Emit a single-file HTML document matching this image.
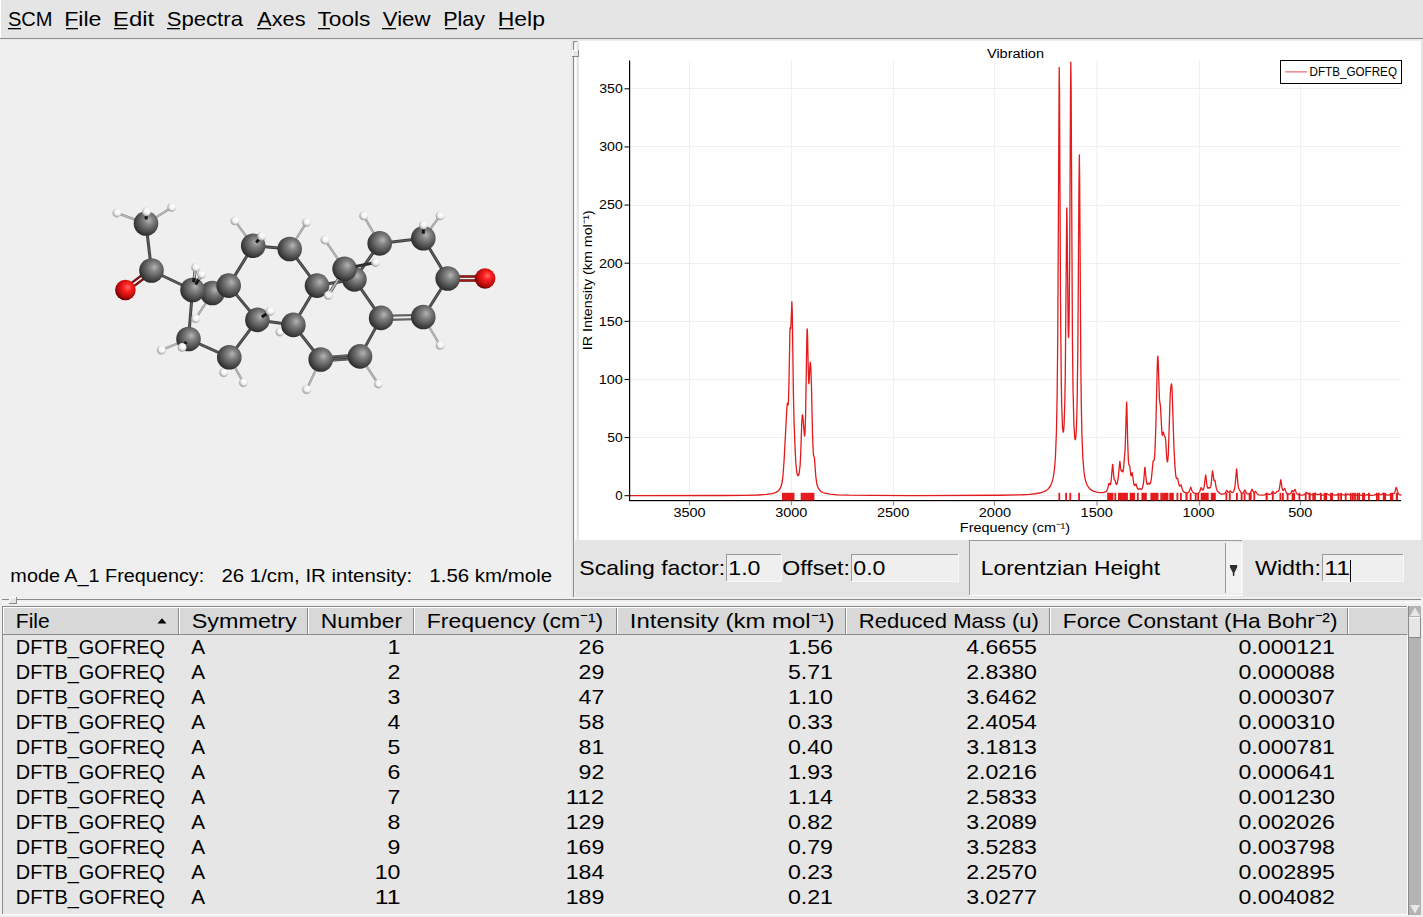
<!DOCTYPE html>
<html><head><meta charset="utf-8"><title>SCM Spectra</title>
<style>html,body{margin:0;padding:0;width:1423px;height:917px;overflow:hidden;background:#efefef}</style></head>
<body><svg width="1423" height="917" viewBox="0 0 1423 917" style="display:block;font-family:'Liberation Sans',sans-serif"><defs>
<radialGradient id="gC" cx="0.58" cy="0.40" r="0.66" fx="0.62" fy="0.36"><stop offset="0" stop-color="#b4b4b4"/><stop offset="0.3" stop-color="#808080"/><stop offset="0.75" stop-color="#444444"/><stop offset="1" stop-color="#222222"/></radialGradient>
<radialGradient id="gO" cx="0.58" cy="0.40" r="0.66" fx="0.62" fy="0.36"><stop offset="0" stop-color="#ff6a6a"/><stop offset="0.3" stop-color="#ff2020"/><stop offset="0.75" stop-color="#b00808"/><stop offset="1" stop-color="#3a0000"/></radialGradient>
<radialGradient id="gH" cx="0.58" cy="0.40" r="0.66" fx="0.62" fy="0.36"><stop offset="0" stop-color="#ffffff"/><stop offset="0.5" stop-color="#f2f2f2"/><stop offset="1" stop-color="#8a8a8a"/></radialGradient>
</defs><rect x="0" y="0" width="1423" height="917" fill="#efefef"/><rect x="0" y="0" width="1423" height="38" fill="#e5e5e5"/><rect x="0" y="0" width="1" height="38" fill="#ffffff"/><rect x="0" y="38" width="1423" height="1" fill="#8c8c8c"/><rect x="0" y="39" width="1423" height="1" fill="#e9e9e9"/><rect x="0" y="40" width="1423" height="1" fill="#ececec"/><text x="7.94" y="25.90" font-size="21.00" textLength="44.65" lengthAdjust="spacingAndGlyphs" fill="#000">SCM</text><rect x="8" y="28" width="13" height="1.3" fill="#000"/><text x="64.17" y="25.90" font-size="21.00" textLength="37.35" lengthAdjust="spacingAndGlyphs" fill="#000">File</text><rect x="66" y="28" width="12" height="1.3" fill="#000"/><text x="113.01" y="25.90" font-size="21.00" textLength="41.21" lengthAdjust="spacingAndGlyphs" fill="#000">Edit</text><rect x="114" y="28" width="13" height="1.3" fill="#000"/><text x="166.65" y="25.90" font-size="21.00" textLength="76.32" lengthAdjust="spacingAndGlyphs" fill="#000">Spectra</text><rect x="167" y="28" width="13" height="1.3" fill="#000"/><text x="257.20" y="25.90" font-size="21.00" textLength="48.31" lengthAdjust="spacingAndGlyphs" fill="#000">Axes</text><rect x="257" y="28" width="14" height="1.3" fill="#000"/><text x="317.46" y="25.90" font-size="21.00" textLength="52.98" lengthAdjust="spacingAndGlyphs" fill="#000">Tools</text><rect x="318" y="28" width="12" height="1.3" fill="#000"/><text x="382.74" y="25.90" font-size="21.00" textLength="47.74" lengthAdjust="spacingAndGlyphs" fill="#000">View</text><rect x="382" y="28" width="14" height="1.3" fill="#000"/><text x="443.31" y="25.90" font-size="21.00" textLength="41.69" lengthAdjust="spacingAndGlyphs" fill="#000">Play</text><rect x="445" y="28" width="12" height="1.3" fill="#000"/><text x="497.69" y="25.90" font-size="21.00" textLength="47.24" lengthAdjust="spacingAndGlyphs" fill="#000">Help</text><rect x="499" y="28" width="15" height="1.3" fill="#000"/><rect x="0" y="41" width="571" height="556" fill="#efefef"/><text x="10.39" y="582.10" font-size="18.90" textLength="193.85" lengthAdjust="spacingAndGlyphs" fill="#000">mode A_1 Frequency:</text><text x="221.42" y="582.10" font-size="18.90" textLength="190.73" lengthAdjust="spacingAndGlyphs" fill="#000">26 1/cm, IR intensity:</text><text x="429.38" y="582.10" font-size="18.90" textLength="122.67" lengthAdjust="spacingAndGlyphs" fill="#000">1.56 km/mole</text><rect x="571" y="41" width="2" height="556" fill="#e6e6e6"/><rect x="573" y="41" width="1" height="556" fill="#8a8a8a"/><rect x="575" y="41" width="1" height="556" fill="#ffffff"/><rect x="576" y="41" width="1" height="556" fill="#f4f4f4"/><rect x="577" y="41" width="2" height="556" fill="#e4e4e4"/><rect x="573" y="41" width="4" height="1" fill="#8a8a8a"/><rect x="572" y="50" width="7" height="7" fill="#e6e6e6"/><rect x="572" y="50" width="7" height="1" fill="#ffffff"/><rect x="572" y="50" width="1" height="7" fill="#ffffff"/><rect x="572" y="56" width="7" height="1" fill="#8a8a8a"/><rect x="578" y="50" width="1" height="7" fill="#8a8a8a"/><rect x="579" y="41" width="842" height="499" fill="#ffffff"/><rect x="1421" y="41" width="2" height="556" fill="#e4e4e4"/><rect x="689" y="61" width="1" height="439" fill="#f0f0f0"/><rect x="791" y="61" width="1" height="439" fill="#f0f0f0"/><rect x="893" y="61" width="1" height="439" fill="#f0f0f0"/><rect x="994" y="61" width="1" height="439" fill="#f0f0f0"/><rect x="1096.5" y="61" width="1" height="439" fill="#f0f0f0"/><rect x="1199" y="61" width="1" height="439" fill="#f0f0f0"/><rect x="1300" y="61" width="1" height="439" fill="#f0f0f0"/><rect x="630" y="495" width="771" height="1" fill="#f0f0f0"/><rect x="630" y="437" width="771" height="1" fill="#f0f0f0"/><rect x="630" y="379" width="771" height="1" fill="#f0f0f0"/><rect x="630" y="321" width="771" height="1" fill="#f0f0f0"/><rect x="630" y="263" width="771" height="1" fill="#f0f0f0"/><rect x="630" y="205" width="771" height="1" fill="#f0f0f0"/><rect x="630" y="146" width="771" height="1" fill="#f0f0f0"/><rect x="630" y="88" width="771" height="1" fill="#f0f0f0"/><path d="M629.50,495.65 L722.85,495.49 L743.92,495.31 L757.36,494.99 L766.42,494.43 L772.43,493.53 L774.56,492.92 L776.40,492.13 L777.92,491.14 L779.15,489.94 L780.47,487.86 L781.49,485.10 L782.30,481.25 L782.91,476.53 L784.13,459.89 L786.88,407.56 L787.39,403.21 L787.60,403.32 L788.10,405.01 L788.41,402.52 L788.92,385.57 L789.94,330.65 L790.14,327.66 L790.24,327.40 L790.65,329.00 L790.85,327.92 L791.87,301.77 L792.28,311.96 L793.40,393.78 L794.11,422.86 L795.23,451.84 L795.84,463.15 L796.76,471.99 L797.27,474.33 L797.88,475.61 L798.28,475.67 L798.59,475.30 L799.20,473.28 L800.12,465.12 L800.73,453.17 L801.75,422.74 L802.25,415.25 L802.36,414.86 L802.56,414.96 L802.97,417.69 L804.39,435.29 L804.60,435.96 L804.70,435.80 L805.00,433.09 L805.61,415.57 L806.73,343.36 L807.04,330.77 L807.24,328.83 L807.55,335.39 L808.36,374.07 L808.77,383.26 L808.87,383.67 L808.97,383.39 L809.18,381.05 L809.89,365.79 L810.19,362.44 L810.30,362.22 L810.50,363.09 L810.91,369.24 L811.52,388.34 L812.54,435.51 L813.25,452.54 L813.66,455.83 L814.27,457.07 L814.47,458.24 L815.79,476.40 L816.81,483.71 L817.52,486.36 L818.54,488.68 L819.76,490.36 L821.29,491.65 L822.82,492.49 L824.75,493.19 L829.84,494.18 L837.48,494.81 L848.98,495.19 L872.09,495.44 L912.61,495.53 L999.44,495.24 L1022.04,494.73 L1029.47,494.32 L1035.17,493.76 L1039.65,493.01 L1043.22,491.99 L1045.96,490.70 L1048.20,488.97 L1050.14,486.52 L1051.66,483.31 L1052.89,479.15 L1053.90,473.59 L1054.72,466.56 L1055.43,456.93 L1056.45,431.27 L1057.16,394.29 L1057.77,333.50 L1059.20,67.37 L1059.50,88.46 L1060.52,300.99 L1061.23,378.85 L1061.74,406.68 L1062.46,426.07 L1062.86,430.86 L1063.27,432.23 L1063.68,430.38 L1064.08,424.98 L1064.80,403.46 L1065.31,372.35 L1066.73,208.54 L1066.83,207.84 L1067.04,217.64 L1068.16,327.67 L1068.36,334.96 L1068.46,336.78 L1068.56,337.42 L1068.67,336.88 L1069.07,322.62 L1069.68,258.23 L1070.50,94.41 L1070.80,62.26 L1071.11,85.39 L1072.43,339.40 L1073.04,390.73 L1073.96,426.10 L1074.77,437.93 L1074.98,439.10 L1075.28,439.70 L1075.69,438.30 L1076.10,434.08 L1076.50,426.23 L1077.11,404.10 L1077.83,350.03 L1078.95,185.72 L1079.35,155.00 L1079.66,177.97 L1080.78,359.55 L1081.29,403.86 L1081.90,434.28 L1082.82,457.73 L1084.04,472.27 L1084.85,477.53 L1085.87,481.77 L1087.09,485.00 L1088.62,487.53 L1090.14,489.15 L1091.88,490.37 L1094.01,491.36 L1096.56,492.10 L1099.82,492.57 L1102.77,492.60 L1104.80,492.21 L1106.23,491.36 L1106.94,490.42 L1107.45,489.25 L1108.88,483.37 L1109.18,483.34 L1109.79,484.58 L1110.10,484.82 L1110.40,484.50 L1110.71,483.56 L1111.32,479.36 L1112.54,464.28 L1112.85,465.42 L1113.56,474.50 L1114.07,478.55 L1114.37,479.54 L1115.09,480.57 L1115.90,483.53 L1116.41,484.46 L1116.82,484.30 L1117.22,483.34 L1118.24,477.99 L1119.77,461.61 L1119.87,461.49 L1120.07,462.34 L1120.68,468.43 L1121.09,470.73 L1121.30,470.98 L1121.91,470.40 L1122.72,472.04 L1123.03,471.75 L1123.54,468.46 L1125.16,449.10 L1126.59,402.13 L1126.89,406.89 L1127.71,443.02 L1128.32,459.22 L1128.73,463.80 L1128.93,464.74 L1129.54,465.44 L1129.75,466.26 L1130.87,475.14 L1131.07,475.70 L1131.27,475.75 L1132.09,472.92 L1132.29,472.80 L1132.39,473.06 L1133.61,482.75 L1134.02,484.61 L1134.43,485.53 L1134.63,485.68 L1134.94,485.57 L1135.65,484.15 L1135.95,483.90 L1136.26,484.46 L1137.18,487.83 L1137.89,489.12 L1138.50,489.31 L1139.72,488.47 L1140.74,489.32 L1141.45,489.30 L1141.96,488.78 L1142.47,487.77 L1143.28,484.34 L1143.90,478.97 L1144.71,468.40 L1145.02,467.25 L1146.13,479.20 L1146.85,483.51 L1147.15,484.24 L1147.46,484.48 L1147.76,484.29 L1148.58,483.05 L1148.88,483.15 L1149.70,484.05 L1150.00,483.95 L1150.31,483.50 L1150.92,481.48 L1151.43,478.27 L1152.96,462.33 L1153.26,461.00 L1153.46,460.69 L1153.97,460.51 L1154.28,459.56 L1154.89,452.70 L1155.81,427.27 L1157.23,367.51 L1157.54,359.16 L1157.84,356.07 L1158.25,361.45 L1159.37,397.43 L1159.67,401.36 L1160.29,404.78 L1160.59,408.30 L1161.91,433.11 L1162.12,434.67 L1162.22,435.06 L1162.42,435.15 L1163.14,432.35 L1163.44,432.12 L1164.46,436.39 L1164.66,436.67 L1165.17,436.81 L1165.38,437.56 L1165.78,441.80 L1166.70,457.32 L1167.11,461.03 L1167.41,461.88 L1167.72,461.15 L1168.33,454.45 L1170.16,395.99 L1170.87,386.89 L1171.28,384.24 L1171.48,383.82 L1171.59,383.99 L1171.89,386.58 L1172.20,392.75 L1173.93,446.74 L1174.94,466.34 L1175.66,474.84 L1176.37,478.37 L1176.78,478.66 L1177.39,478.11 L1177.69,478.46 L1178.81,484.11 L1179.32,485.66 L1179.83,486.05 L1180.75,484.78 L1181.05,484.89 L1182.58,490.07 L1183.39,491.38 L1184.41,492.21 L1185.53,492.68 L1186.65,492.87 L1187.67,492.79 L1188.48,492.40 L1189.40,491.12 L1190.72,487.22 L1191.03,487.58 L1191.84,490.43 L1192.45,491.77 L1194.08,493.08 L1195.20,493.56 L1197.34,493.56 L1198.26,493.25 L1198.97,492.73 L1199.89,491.23 L1201.11,487.56 L1201.41,487.71 L1202.33,489.76 L1202.63,490.04 L1203.04,489.95 L1203.65,488.84 L1204.16,486.70 L1205.59,474.96 L1205.89,475.87 L1206.81,484.34 L1207.42,487.40 L1208.03,488.36 L1209.05,487.58 L1209.86,487.91 L1210.17,487.80 L1210.68,486.70 L1211.19,484.01 L1212.30,471.93 L1212.61,470.77 L1213.83,480.12 L1214.14,480.77 L1214.75,480.19 L1215.05,480.61 L1216.07,487.12 L1216.78,489.93 L1217.19,490.69 L1218.11,491.53 L1219.13,492.88 L1220.04,493.60 L1221.26,494.02 L1222.79,494.14 L1224.11,493.92 L1225.34,493.01 L1226.56,490.48 L1226.86,490.26 L1227.88,491.95 L1228.39,492.44 L1229.10,492.28 L1230.22,490.93 L1230.53,491.07 L1231.65,492.47 L1232.56,492.55 L1233.28,491.99 L1233.89,490.95 L1234.80,487.47 L1235.41,482.40 L1236.53,469.01 L1236.84,470.33 L1237.86,483.44 L1238.47,487.63 L1239.08,489.48 L1240.81,492.18 L1241.42,492.88 L1242.13,493.22 L1242.85,493.15 L1243.46,492.66 L1244.88,489.92 L1245.19,490.20 L1246.20,492.69 L1246.82,493.51 L1248.04,494.09 L1249.36,493.96 L1250.07,493.49 L1250.58,492.81 L1251.80,489.50 L1252.11,489.24 L1253.13,491.69 L1253.64,492.48 L1254.25,492.62 L1255.26,491.49 L1255.57,491.45 L1257.20,494.01 L1258.01,494.53 L1259.13,494.85 L1261.98,495.05 L1264.43,494.86 L1265.55,494.40 L1266.87,493.21 L1268.60,494.41 L1270.13,494.45 L1271.35,493.70 L1272.77,491.40 L1273.08,491.54 L1274.20,493.22 L1274.71,493.50 L1275.22,493.48 L1275.93,492.97 L1277.05,491.34 L1278.17,491.47 L1278.88,490.47 L1279.49,488.04 L1280.71,479.77 L1281.02,480.51 L1282.04,487.87 L1282.65,489.99 L1282.95,490.40 L1283.36,490.39 L1284.38,488.43 L1284.68,488.36 L1286.31,492.88 L1287.13,493.76 L1288.35,494.22 L1289.47,494.16 L1290.39,493.65 L1291.00,492.84 L1292.12,490.55 L1292.42,490.63 L1293.24,491.69 L1293.64,491.69 L1294.97,489.42 L1295.27,489.80 L1296.29,492.77 L1297.00,493.88 L1298.33,494.70 L1300.46,495.06 L1302.70,495.04 L1304.23,494.70 L1305.04,494.12 L1306.06,492.59 L1306.47,492.30 L1307.90,493.78 L1308.40,493.80 L1309.52,493.34 L1310.95,494.57 L1312.37,494.93 L1314.00,494.60 L1315.53,493.25 L1316.85,494.38 L1317.46,494.67 L1318.28,494.69 L1319.70,494.16 L1321.13,494.94 L1322.66,495.20 L1325.00,494.90 L1326.73,493.58 L1328.26,494.72 L1329.38,494.99 L1330.49,494.80 L1331.82,494.03 L1333.35,494.93 L1334.57,495.19 L1336.30,495.07 L1337.93,494.30 L1339.35,494.98 L1340.17,495.16 L1341.49,495.09 L1343.02,494.51 L1344.54,495.06 L1345.56,495.14 L1346.68,494.89 L1348.11,493.96 L1349.63,494.90 L1350.65,495.12 L1351.77,494.99 L1353.20,494.32 L1354.72,495.07 L1356.15,495.32 L1357.78,495.25 L1359.30,494.80 L1361.54,495.30 L1364.09,495.03 L1365.92,495.12 L1367.65,494.58 L1369.59,495.27 L1372.13,495.40 L1374.17,495.17 L1375.80,494.45 L1377.02,494.79 L1377.73,494.79 L1379.26,493.99 L1380.58,494.61 L1381.39,494.66 L1382.11,494.32 L1383.33,493.10 L1384.86,494.32 L1386.89,494.99 L1388.32,495.10 L1391.17,494.43 L1392.49,493.56 L1393.51,493.66 L1394.12,493.38 L1394.93,491.96 L1395.95,487.99 L1396.26,487.42 L1396.56,487.79 L1397.68,492.03 L1398.40,493.61 L1399.52,494.65 L1401.45,495.22" fill="none" stroke="#e41a1c" stroke-width="1.3" stroke-linejoin="round"/><rect x="629" y="60.5" width="1.2" height="440.5" fill="#000"/><rect x="629" y="500" width="772" height="1.2" fill="#000"/><rect x="782.00" y="492.8" width="12.50" height="7.6" fill="#e41a1c"/><rect x="800.70" y="492.8" width="13.70" height="7.6" fill="#e41a1c"/><rect x="1058.40" y="492.8" width="1.80" height="7.6" fill="#e41a1c"/><rect x="1065.20" y="492.8" width="1.80" height="7.6" fill="#e41a1c"/><rect x="1069.40" y="492.8" width="1.80" height="7.6" fill="#e41a1c"/><rect x="1078.20" y="492.8" width="1.80" height="7.6" fill="#e41a1c"/><rect x="1107.20" y="492.8" width="6.30" height="7.6" fill="#e41a1c"/><rect x="1114.40" y="492.8" width="1.80" height="7.6" fill="#e41a1c"/><rect x="1118.00" y="492.8" width="9.90" height="7.6" fill="#e41a1c"/><rect x="1129.70" y="492.8" width="5.40" height="7.6" fill="#e41a1c"/><rect x="1136.90" y="492.8" width="1.80" height="7.6" fill="#e41a1c"/><rect x="1141.40" y="492.8" width="5.40" height="7.6" fill="#e41a1c"/><rect x="1150.40" y="492.8" width="8.10" height="7.6" fill="#e41a1c"/><rect x="1160.30" y="492.8" width="1.80" height="7.6" fill="#e41a1c"/><rect x="1162.10" y="492.8" width="6.30" height="7.6" fill="#e41a1c"/><rect x="1169.30" y="492.8" width="4.50" height="7.6" fill="#e41a1c"/><rect x="1176.50" y="492.8" width="1.80" height="7.6" fill="#e41a1c"/><rect x="1180.00" y="492.8" width="1.80" height="7.6" fill="#e41a1c"/><rect x="1185.50" y="492.8" width="2.10" height="7.6" fill="#e41a1c"/><rect x="1189.70" y="492.8" width="1.80" height="7.6" fill="#e41a1c"/><rect x="1194.80" y="492.8" width="1.80" height="7.6" fill="#e41a1c"/><rect x="1197.30" y="492.8" width="1.80" height="7.6" fill="#e41a1c"/><rect x="1200.70" y="492.8" width="8.00" height="7.6" fill="#e41a1c"/><rect x="1210.80" y="492.8" width="5.00" height="7.6" fill="#e41a1c"/><rect x="1225.50" y="492.8" width="1.80" height="7.6" fill="#e41a1c"/><rect x="1228.90" y="492.8" width="1.80" height="7.6" fill="#e41a1c"/><rect x="1236.00" y="492.8" width="1.80" height="7.6" fill="#e41a1c"/><rect x="1240.70" y="492.8" width="1.80" height="7.6" fill="#e41a1c"/><rect x="1243.70" y="492.8" width="1.80" height="7.6" fill="#e41a1c"/><rect x="1248.70" y="492.8" width="3.00" height="7.6" fill="#e41a1c"/><rect x="1253.40" y="492.8" width="1.80" height="7.6" fill="#e41a1c"/><rect x="1265.60" y="492.8" width="2.10" height="7.6" fill="#e41a1c"/><rect x="1271.90" y="492.8" width="1.80" height="7.6" fill="#e41a1c"/><rect x="1279.50" y="492.8" width="1.80" height="7.6" fill="#e41a1c"/><rect x="1282.00" y="492.8" width="1.80" height="7.6" fill="#e41a1c"/><rect x="1286.70" y="492.8" width="1.80" height="7.6" fill="#e41a1c"/><rect x="1291.70" y="492.8" width="3.40" height="7.6" fill="#e41a1c"/><rect x="1298.50" y="492.8" width="1.80" height="7.6" fill="#e41a1c"/><rect x="1304.80" y="492.8" width="1.80" height="7.6" fill="#e41a1c"/><rect x="1308.60" y="492.8" width="2.10" height="7.6" fill="#e41a1c"/><rect x="1312.30" y="492.8" width="1.80" height="7.6" fill="#e41a1c"/><rect x="1314.10" y="492.8" width="1.80" height="7.6" fill="#e41a1c"/><rect x="1320.00" y="492.8" width="1.80" height="7.6" fill="#e41a1c"/><rect x="1323.70" y="492.8" width="3.40" height="7.6" fill="#e41a1c"/><rect x="1330.00" y="492.8" width="3.00" height="7.6" fill="#e41a1c"/><rect x="1337.60" y="492.8" width="1.80" height="7.6" fill="#e41a1c"/><rect x="1340.20" y="492.8" width="1.80" height="7.6" fill="#e41a1c"/><rect x="1344.80" y="492.8" width="1.80" height="7.6" fill="#e41a1c"/><rect x="1349.90" y="492.8" width="1.80" height="7.6" fill="#e41a1c"/><rect x="1352.00" y="492.8" width="1.80" height="7.6" fill="#e41a1c"/><rect x="1354.10" y="492.8" width="1.80" height="7.6" fill="#e41a1c"/><rect x="1356.60" y="492.8" width="1.80" height="7.6" fill="#e41a1c"/><rect x="1358.30" y="492.8" width="1.80" height="7.6" fill="#e41a1c"/><rect x="1362.10" y="492.8" width="3.00" height="7.6" fill="#e41a1c"/><rect x="1368.00" y="492.8" width="1.80" height="7.6" fill="#e41a1c"/><rect x="1376.00" y="492.8" width="1.80" height="7.6" fill="#e41a1c"/><rect x="1377.70" y="492.8" width="1.80" height="7.6" fill="#e41a1c"/><rect x="1382.80" y="492.8" width="3.30" height="7.6" fill="#e41a1c"/><rect x="1389.90" y="492.8" width="3.40" height="7.6" fill="#e41a1c"/><rect x="1395.80" y="492.8" width="2.20" height="7.6" fill="#e41a1c"/><rect x="624.5" y="495.2" width="4.5" height="1" fill="#000"/><text x="615.30" y="500.10" font-size="13.12" textLength="7.36" lengthAdjust="spacingAndGlyphs" fill="#000">0</text><rect x="624.5" y="437.07" width="4.5" height="1" fill="#000"/><text x="607.27" y="441.97" font-size="13.12" textLength="15.47" lengthAdjust="spacingAndGlyphs" fill="#000">50</text><rect x="624.5" y="378.94" width="4.5" height="1" fill="#000"/><text x="598.70" y="383.84" font-size="13.12" textLength="24.12" lengthAdjust="spacingAndGlyphs" fill="#000">100</text><rect x="624.5" y="320.80999999999995" width="4.5" height="1" fill="#000"/><text x="598.70" y="325.71" font-size="13.12" textLength="24.12" lengthAdjust="spacingAndGlyphs" fill="#000">150</text><rect x="624.5" y="262.67999999999995" width="4.5" height="1" fill="#000"/><text x="598.98" y="267.58" font-size="13.12" textLength="23.83" lengthAdjust="spacingAndGlyphs" fill="#000">200</text><rect x="624.5" y="204.54999999999995" width="4.5" height="1" fill="#000"/><text x="598.98" y="209.45" font-size="13.12" textLength="23.83" lengthAdjust="spacingAndGlyphs" fill="#000">250</text><rect x="624.5" y="146.41999999999996" width="4.5" height="1" fill="#000"/><text x="599.26" y="151.32" font-size="13.12" textLength="23.54" lengthAdjust="spacingAndGlyphs" fill="#000">300</text><rect x="624.5" y="88.28999999999996" width="4.5" height="1" fill="#000"/><text x="599.26" y="93.19" font-size="13.12" textLength="23.54" lengthAdjust="spacingAndGlyphs" fill="#000">350</text><rect x="688.9" y="501" width="1.2" height="4.5" fill="#909090"/><text x="673.40" y="516.90" font-size="13.12" textLength="32.19" lengthAdjust="spacingAndGlyphs" fill="#000">3500</text><rect x="790.9" y="501" width="1.2" height="4.5" fill="#909090"/><text x="775.20" y="516.90" font-size="13.12" textLength="32.19" lengthAdjust="spacingAndGlyphs" fill="#000">3000</text><rect x="892.9" y="501" width="1.2" height="4.5" fill="#909090"/><text x="877.00" y="516.90" font-size="13.12" textLength="32.19" lengthAdjust="spacingAndGlyphs" fill="#000">2500</text><rect x="993.9" y="501" width="1.2" height="4.5" fill="#909090"/><text x="978.80" y="516.90" font-size="13.12" textLength="32.19" lengthAdjust="spacingAndGlyphs" fill="#000">2000</text><rect x="1096.4" y="501" width="1.2" height="4.5" fill="#909090"/><text x="1080.60" y="516.90" font-size="13.12" textLength="32.19" lengthAdjust="spacingAndGlyphs" fill="#000">1500</text><rect x="1198.9" y="501" width="1.2" height="4.5" fill="#909090"/><text x="1182.40" y="516.90" font-size="13.12" textLength="32.19" lengthAdjust="spacingAndGlyphs" fill="#000">1000</text><rect x="1299.9" y="501" width="1.2" height="4.5" fill="#909090"/><text x="1288.23" y="516.90" font-size="13.12" textLength="24.15" lengthAdjust="spacingAndGlyphs" fill="#000">500</text><text x="959.88" y="531.80" font-size="13.12" textLength="110.24" lengthAdjust="spacingAndGlyphs" fill="#000">Frequency (cm⁻¹)</text><g transform="translate(592.3,280.3) rotate(-90)"><text x="-69.94" y="0" font-size="13.12" textLength="139.88" lengthAdjust="spacingAndGlyphs">IR Intensity (km mol⁻¹)</text></g><text x="986.96" y="57.90" font-size="13.12" textLength="57.08" lengthAdjust="spacingAndGlyphs" fill="#000">Vibration</text><rect x="1280.5" y="60.5" width="121" height="23" fill="#fff" stroke="#000" stroke-width="1"/><rect x="1285" y="71.2" width="22" height="1.3" fill="#e87878"/><text x="1309.58" y="76.00" font-size="12.60" textLength="87.38" lengthAdjust="spacingAndGlyphs" fill="#000">DFTB_GOFREQ</text><rect x="575" y="540" width="848" height="57" fill="#e4e4e4"/><text x="579.30" y="574.80" font-size="21.00" textLength="145.79" lengthAdjust="spacingAndGlyphs" fill="#000">Scaling factor:</text><rect x="726" y="554" width="56" height="28" fill="#efefef"/><rect x="726" y="554" width="56" height="1" fill="#9a9a9a"/><rect x="726" y="554" width="1" height="28" fill="#9a9a9a"/><rect x="726" y="581" width="56" height="1" fill="#f8f8f8"/><rect x="781" y="554" width="1" height="28" fill="#f8f8f8"/><text x="728.30" y="574.80" font-size="21.00" textLength="32.18" lengthAdjust="spacingAndGlyphs" fill="#000">1.0</text><text x="782.30" y="574.80" font-size="21.00" textLength="67.65" lengthAdjust="spacingAndGlyphs" fill="#000">Offset:</text><rect x="851" y="554" width="108" height="28" fill="#efefef"/><rect x="851" y="554" width="108" height="1" fill="#9a9a9a"/><rect x="851" y="554" width="1" height="28" fill="#9a9a9a"/><rect x="851" y="581" width="108" height="1" fill="#f8f8f8"/><rect x="958" y="554" width="1" height="28" fill="#f8f8f8"/><text x="853.30" y="574.80" font-size="21.00" textLength="32.18" lengthAdjust="spacingAndGlyphs" fill="#000">0.0</text><rect x="969" y="540" width="274" height="56" fill="#ececec"/><rect x="969" y="540" width="274" height="1" fill="#9a9a9a"/><rect x="969" y="540" width="1" height="56" fill="#9a9a9a"/><rect x="969" y="595" width="274" height="1" fill="#ffffff"/><rect x="1242" y="540" width="1" height="56" fill="#f4f4f4"/><rect x="1226" y="543" width="16" height="50" fill="#f2f2f2"/><rect x="1241" y="543" width="1" height="50" fill="#fafafa"/><rect x="1225" y="543" width="1" height="50" fill="#9a9a9a"/><path d="M1230,565 L1237.2,565 L1237.2,567.2 L1234.5,572.5 L1234.2,576 L1233,576 L1232.7,572.5 L1230,567.2 Z" fill="#2e2e2e"/><text x="980.80" y="575.00" font-size="21.00" textLength="179.25" lengthAdjust="spacingAndGlyphs" fill="#000">Lorentzian Height</text><text x="1254.90" y="574.80" font-size="21.00" textLength="66.16" lengthAdjust="spacingAndGlyphs" fill="#000">Width:</text><rect x="1322" y="554" width="82" height="28" fill="#efefef"/><rect x="1322" y="554" width="82" height="1" fill="#9a9a9a"/><rect x="1322" y="554" width="1" height="28" fill="#9a9a9a"/><rect x="1322" y="581" width="82" height="1" fill="#f8f8f8"/><rect x="1403" y="554" width="1" height="28" fill="#f8f8f8"/><text x="1324.30" y="574.80" font-size="21.00" textLength="25.74" lengthAdjust="spacingAndGlyphs" fill="#000">11</text><rect x="1350" y="560" width="1" height="22" fill="#000"/><rect x="0" y="597" width="1423" height="9" fill="#efefef"/><rect x="2" y="599" width="1419" height="1" fill="#8a8a8a"/><rect x="2" y="602" width="1419" height="1" fill="#ffffff"/><rect x="9" y="597" width="8" height="7" fill="#e6e6e6"/><rect x="9" y="597" width="8" height="1" fill="#ffffff"/><rect x="9" y="597" width="1" height="7" fill="#ffffff"/><rect x="9" y="603" width="8" height="1" fill="#8a8a8a"/><rect x="16" y="597" width="1" height="7" fill="#8a8a8a"/><rect x="2" y="606" width="1406" height="309" fill="#e6e6e6"/><rect x="2" y="606" width="1406" height="1" fill="#8a8a8a"/><rect x="2" y="606" width="1" height="309" fill="#8a8a8a"/><rect x="2" y="914" width="1406" height="1" fill="#ffffff"/><rect x="1407" y="606" width="1" height="309" fill="#ffffff"/><rect x="3" y="607" width="1405" height="28" fill="#d8d8d8"/><rect x="3" y="607" width="1404" height="1" fill="#ffffff"/><rect x="3" y="634" width="1404" height="1" fill="#8a8a8a"/><rect x="178" y="608" width="1" height="26" fill="#8a8a8a"/><rect x="179" y="608" width="1" height="26" fill="#ffffff"/><rect x="307" y="608" width="1" height="26" fill="#8a8a8a"/><rect x="308" y="608" width="1" height="26" fill="#ffffff"/><rect x="413" y="608" width="1" height="26" fill="#8a8a8a"/><rect x="414" y="608" width="1" height="26" fill="#ffffff"/><rect x="616" y="608" width="1" height="26" fill="#8a8a8a"/><rect x="617" y="608" width="1" height="26" fill="#ffffff"/><rect x="845" y="608" width="1" height="26" fill="#8a8a8a"/><rect x="846" y="608" width="1" height="26" fill="#ffffff"/><rect x="1049" y="608" width="1" height="26" fill="#8a8a8a"/><rect x="1050" y="608" width="1" height="26" fill="#ffffff"/><rect x="1347" y="608" width="1" height="26" fill="#8a8a8a"/><rect x="1348" y="608" width="1" height="26" fill="#ffffff"/><rect x="3" y="608" width="1" height="26" fill="#ffffff"/><text x="15.80" y="627.60" font-size="21.00" textLength="33.89" lengthAdjust="spacingAndGlyphs" fill="#000">File</text><text x="191.80" y="627.60" font-size="21.00" textLength="104.98" lengthAdjust="spacingAndGlyphs" fill="#000">Symmetry</text><text x="320.80" y="627.60" font-size="21.00" textLength="81.32" lengthAdjust="spacingAndGlyphs" fill="#000">Number</text><text x="426.80" y="627.60" font-size="21.00" textLength="176.45" lengthAdjust="spacingAndGlyphs" fill="#000">Frequency (cm⁻¹)</text><text x="629.80" y="627.60" font-size="21.00" textLength="204.74" lengthAdjust="spacingAndGlyphs" fill="#000">Intensity (km mol⁻¹)</text><text x="858.80" y="627.60" font-size="21.00" textLength="180.17" lengthAdjust="spacingAndGlyphs" fill="#000">Reduced Mass (u)</text><text x="1062.80" y="627.60" font-size="21.00" textLength="274.66" lengthAdjust="spacingAndGlyphs" fill="#000">Force Constant (Ha Bohr⁻²)</text><path d="M157.5,623.5 L166.5,623.5 L162,618.3 Z" fill="#000"/><text x="15.80" y="653.90" font-size="21.00" textLength="149.30" lengthAdjust="spacingAndGlyphs" fill="#000">DFTB_GOFREQ</text><text x="191.30" y="653.90" font-size="21.00" textLength="13.85" lengthAdjust="spacingAndGlyphs" fill="#000">A</text><text x="387.63" y="653.90" font-size="21.00" textLength="12.87" lengthAdjust="spacingAndGlyphs" fill="#000">1</text><text x="578.56" y="653.90" font-size="21.00" textLength="25.74" lengthAdjust="spacingAndGlyphs" fill="#000">26</text><text x="787.95" y="653.90" font-size="21.00" textLength="45.05" lengthAdjust="spacingAndGlyphs" fill="#000">1.56</text><text x="966.21" y="653.90" font-size="21.00" textLength="70.79" lengthAdjust="spacingAndGlyphs" fill="#000">4.6655</text><text x="1238.46" y="653.90" font-size="21.00" textLength="96.54" lengthAdjust="spacingAndGlyphs" fill="#000">0.000121</text><text x="15.80" y="678.90" font-size="21.00" textLength="149.30" lengthAdjust="spacingAndGlyphs" fill="#000">DFTB_GOFREQ</text><text x="191.30" y="678.90" font-size="21.00" textLength="13.85" lengthAdjust="spacingAndGlyphs" fill="#000">A</text><text x="387.63" y="678.90" font-size="21.00" textLength="12.87" lengthAdjust="spacingAndGlyphs" fill="#000">2</text><text x="578.56" y="678.90" font-size="21.00" textLength="25.74" lengthAdjust="spacingAndGlyphs" fill="#000">29</text><text x="787.95" y="678.90" font-size="21.00" textLength="45.05" lengthAdjust="spacingAndGlyphs" fill="#000">5.71</text><text x="966.21" y="678.90" font-size="21.00" textLength="70.79" lengthAdjust="spacingAndGlyphs" fill="#000">2.8380</text><text x="1238.46" y="678.90" font-size="21.00" textLength="96.54" lengthAdjust="spacingAndGlyphs" fill="#000">0.000088</text><text x="15.80" y="703.90" font-size="21.00" textLength="149.30" lengthAdjust="spacingAndGlyphs" fill="#000">DFTB_GOFREQ</text><text x="191.30" y="703.90" font-size="21.00" textLength="13.85" lengthAdjust="spacingAndGlyphs" fill="#000">A</text><text x="387.63" y="703.90" font-size="21.00" textLength="12.87" lengthAdjust="spacingAndGlyphs" fill="#000">3</text><text x="578.56" y="703.90" font-size="21.00" textLength="25.74" lengthAdjust="spacingAndGlyphs" fill="#000">47</text><text x="787.95" y="703.90" font-size="21.00" textLength="45.05" lengthAdjust="spacingAndGlyphs" fill="#000">1.10</text><text x="966.21" y="703.90" font-size="21.00" textLength="70.79" lengthAdjust="spacingAndGlyphs" fill="#000">3.6462</text><text x="1238.46" y="703.90" font-size="21.00" textLength="96.54" lengthAdjust="spacingAndGlyphs" fill="#000">0.000307</text><text x="15.80" y="728.90" font-size="21.00" textLength="149.30" lengthAdjust="spacingAndGlyphs" fill="#000">DFTB_GOFREQ</text><text x="191.30" y="728.90" font-size="21.00" textLength="13.85" lengthAdjust="spacingAndGlyphs" fill="#000">A</text><text x="387.63" y="728.90" font-size="21.00" textLength="12.87" lengthAdjust="spacingAndGlyphs" fill="#000">4</text><text x="578.56" y="728.90" font-size="21.00" textLength="25.74" lengthAdjust="spacingAndGlyphs" fill="#000">58</text><text x="787.95" y="728.90" font-size="21.00" textLength="45.05" lengthAdjust="spacingAndGlyphs" fill="#000">0.33</text><text x="966.21" y="728.90" font-size="21.00" textLength="70.79" lengthAdjust="spacingAndGlyphs" fill="#000">2.4054</text><text x="1238.46" y="728.90" font-size="21.00" textLength="96.54" lengthAdjust="spacingAndGlyphs" fill="#000">0.000310</text><text x="15.80" y="753.90" font-size="21.00" textLength="149.30" lengthAdjust="spacingAndGlyphs" fill="#000">DFTB_GOFREQ</text><text x="191.30" y="753.90" font-size="21.00" textLength="13.85" lengthAdjust="spacingAndGlyphs" fill="#000">A</text><text x="387.63" y="753.90" font-size="21.00" textLength="12.87" lengthAdjust="spacingAndGlyphs" fill="#000">5</text><text x="578.56" y="753.90" font-size="21.00" textLength="25.74" lengthAdjust="spacingAndGlyphs" fill="#000">81</text><text x="787.95" y="753.90" font-size="21.00" textLength="45.05" lengthAdjust="spacingAndGlyphs" fill="#000">0.40</text><text x="966.21" y="753.90" font-size="21.00" textLength="70.79" lengthAdjust="spacingAndGlyphs" fill="#000">3.1813</text><text x="1238.46" y="753.90" font-size="21.00" textLength="96.54" lengthAdjust="spacingAndGlyphs" fill="#000">0.000781</text><text x="15.80" y="778.90" font-size="21.00" textLength="149.30" lengthAdjust="spacingAndGlyphs" fill="#000">DFTB_GOFREQ</text><text x="191.30" y="778.90" font-size="21.00" textLength="13.85" lengthAdjust="spacingAndGlyphs" fill="#000">A</text><text x="387.63" y="778.90" font-size="21.00" textLength="12.87" lengthAdjust="spacingAndGlyphs" fill="#000">6</text><text x="578.56" y="778.90" font-size="21.00" textLength="25.74" lengthAdjust="spacingAndGlyphs" fill="#000">92</text><text x="787.95" y="778.90" font-size="21.00" textLength="45.05" lengthAdjust="spacingAndGlyphs" fill="#000">1.93</text><text x="966.21" y="778.90" font-size="21.00" textLength="70.79" lengthAdjust="spacingAndGlyphs" fill="#000">2.0216</text><text x="1238.46" y="778.90" font-size="21.00" textLength="96.54" lengthAdjust="spacingAndGlyphs" fill="#000">0.000641</text><text x="15.80" y="803.90" font-size="21.00" textLength="149.30" lengthAdjust="spacingAndGlyphs" fill="#000">DFTB_GOFREQ</text><text x="191.30" y="803.90" font-size="21.00" textLength="13.85" lengthAdjust="spacingAndGlyphs" fill="#000">A</text><text x="387.63" y="803.90" font-size="21.00" textLength="12.87" lengthAdjust="spacingAndGlyphs" fill="#000">7</text><text x="565.69" y="803.90" font-size="21.00" textLength="38.61" lengthAdjust="spacingAndGlyphs" fill="#000">112</text><text x="787.95" y="803.90" font-size="21.00" textLength="45.05" lengthAdjust="spacingAndGlyphs" fill="#000">1.14</text><text x="966.21" y="803.90" font-size="21.00" textLength="70.79" lengthAdjust="spacingAndGlyphs" fill="#000">2.5833</text><text x="1238.46" y="803.90" font-size="21.00" textLength="96.54" lengthAdjust="spacingAndGlyphs" fill="#000">0.001230</text><text x="15.80" y="828.90" font-size="21.00" textLength="149.30" lengthAdjust="spacingAndGlyphs" fill="#000">DFTB_GOFREQ</text><text x="191.30" y="828.90" font-size="21.00" textLength="13.85" lengthAdjust="spacingAndGlyphs" fill="#000">A</text><text x="387.63" y="828.90" font-size="21.00" textLength="12.87" lengthAdjust="spacingAndGlyphs" fill="#000">8</text><text x="565.69" y="828.90" font-size="21.00" textLength="38.61" lengthAdjust="spacingAndGlyphs" fill="#000">129</text><text x="787.95" y="828.90" font-size="21.00" textLength="45.05" lengthAdjust="spacingAndGlyphs" fill="#000">0.82</text><text x="966.21" y="828.90" font-size="21.00" textLength="70.79" lengthAdjust="spacingAndGlyphs" fill="#000">3.2089</text><text x="1238.46" y="828.90" font-size="21.00" textLength="96.54" lengthAdjust="spacingAndGlyphs" fill="#000">0.002026</text><text x="15.80" y="853.90" font-size="21.00" textLength="149.30" lengthAdjust="spacingAndGlyphs" fill="#000">DFTB_GOFREQ</text><text x="191.30" y="853.90" font-size="21.00" textLength="13.85" lengthAdjust="spacingAndGlyphs" fill="#000">A</text><text x="387.63" y="853.90" font-size="21.00" textLength="12.87" lengthAdjust="spacingAndGlyphs" fill="#000">9</text><text x="565.69" y="853.90" font-size="21.00" textLength="38.61" lengthAdjust="spacingAndGlyphs" fill="#000">169</text><text x="787.95" y="853.90" font-size="21.00" textLength="45.05" lengthAdjust="spacingAndGlyphs" fill="#000">0.79</text><text x="966.21" y="853.90" font-size="21.00" textLength="70.79" lengthAdjust="spacingAndGlyphs" fill="#000">3.5283</text><text x="1238.46" y="853.90" font-size="21.00" textLength="96.54" lengthAdjust="spacingAndGlyphs" fill="#000">0.003798</text><text x="15.80" y="878.90" font-size="21.00" textLength="149.30" lengthAdjust="spacingAndGlyphs" fill="#000">DFTB_GOFREQ</text><text x="191.30" y="878.90" font-size="21.00" textLength="13.85" lengthAdjust="spacingAndGlyphs" fill="#000">A</text><text x="374.76" y="878.90" font-size="21.00" textLength="25.74" lengthAdjust="spacingAndGlyphs" fill="#000">10</text><text x="565.69" y="878.90" font-size="21.00" textLength="38.61" lengthAdjust="spacingAndGlyphs" fill="#000">184</text><text x="787.95" y="878.90" font-size="21.00" textLength="45.05" lengthAdjust="spacingAndGlyphs" fill="#000">0.23</text><text x="966.21" y="878.90" font-size="21.00" textLength="70.79" lengthAdjust="spacingAndGlyphs" fill="#000">2.2570</text><text x="1238.46" y="878.90" font-size="21.00" textLength="96.54" lengthAdjust="spacingAndGlyphs" fill="#000">0.002895</text><text x="15.80" y="903.90" font-size="21.00" textLength="149.30" lengthAdjust="spacingAndGlyphs" fill="#000">DFTB_GOFREQ</text><text x="191.30" y="903.90" font-size="21.00" textLength="13.85" lengthAdjust="spacingAndGlyphs" fill="#000">A</text><text x="374.76" y="903.90" font-size="21.00" textLength="25.74" lengthAdjust="spacingAndGlyphs" fill="#000">11</text><text x="565.69" y="903.90" font-size="21.00" textLength="38.61" lengthAdjust="spacingAndGlyphs" fill="#000">189</text><text x="787.95" y="903.90" font-size="21.00" textLength="45.05" lengthAdjust="spacingAndGlyphs" fill="#000">0.21</text><text x="966.21" y="903.90" font-size="21.00" textLength="70.79" lengthAdjust="spacingAndGlyphs" fill="#000">3.0277</text><text x="1238.46" y="903.90" font-size="21.00" textLength="96.54" lengthAdjust="spacingAndGlyphs" fill="#000">0.004082</text><rect x="1408" y="606" width="13" height="309" fill="#b3b3b3"/><rect x="1408" y="606" width="1" height="309" fill="#8a8a8a"/><path d="M1410,616 L1415,607.5 L1420,616 Z" fill="#e8e8e8"/><rect x="1409" y="617" width="12" height="21" fill="#e6e6e6"/><rect x="1409" y="617" width="12" height="1" fill="#f8f8f8"/><rect x="1409" y="637" width="12" height="1" fill="#8a8a8a"/><rect x="1420" y="617" width="1" height="21" fill="#8a8a8a"/><path d="M1410,905 L1415,913.5 L1420,905 Z" fill="#e8e8e8"/><rect x="1421" y="597" width="2" height="320" fill="#efefef"/><g><line x1="116.9" y1="213.0" x2="146.0" y2="223.5" stroke="#9c9c9c" stroke-width="2.4"/><line x1="116.9" y1="213.0" x2="146.0" y2="223.5" stroke="#c4c4c4" stroke-width="0.84"/><line x1="171.7" y1="207.4" x2="146.0" y2="223.5" stroke="#9c9c9c" stroke-width="2.4"/><line x1="171.7" y1="207.4" x2="146.0" y2="223.5" stroke="#c4c4c4" stroke-width="0.84"/><line x1="195.6" y1="318.7" x2="212.4" y2="293.0" stroke="#9c9c9c" stroke-width="2.4"/><line x1="195.6" y1="318.7" x2="212.4" y2="293.0" stroke="#c4c4c4" stroke-width="0.84"/><line x1="234.9" y1="220.9" x2="253.2" y2="245.7" stroke="#9c9c9c" stroke-width="2.4"/><line x1="234.9" y1="220.9" x2="253.2" y2="245.7" stroke="#c4c4c4" stroke-width="0.84"/><line x1="306.6" y1="222.3" x2="289.7" y2="249.0" stroke="#9c9c9c" stroke-width="2.4"/><line x1="306.6" y1="222.3" x2="289.7" y2="249.0" stroke="#c4c4c4" stroke-width="0.84"/><line x1="324.9" y1="240.0" x2="344.6" y2="268.7" stroke="#9c9c9c" stroke-width="2.4"/><line x1="324.9" y1="240.0" x2="344.6" y2="268.7" stroke="#c4c4c4" stroke-width="0.84"/><line x1="363.7" y1="215.9" x2="379.7" y2="243.4" stroke="#9c9c9c" stroke-width="2.4"/><line x1="363.7" y1="215.9" x2="379.7" y2="243.4" stroke="#c4c4c4" stroke-width="0.84"/><line x1="440.1" y1="215.9" x2="423.3" y2="238.3" stroke="#9c9c9c" stroke-width="2.4"/><line x1="440.1" y1="215.9" x2="423.3" y2="238.3" stroke="#c4c4c4" stroke-width="0.84"/><line x1="279.9" y1="332.0" x2="293.4" y2="324.9" stroke="#9c9c9c" stroke-width="2.4"/><line x1="279.9" y1="332.0" x2="293.4" y2="324.9" stroke="#c4c4c4" stroke-width="0.84"/><line x1="161.3" y1="350.2" x2="188.5" y2="339.0" stroke="#9c9c9c" stroke-width="2.4"/><line x1="161.3" y1="350.2" x2="188.5" y2="339.0" stroke="#c4c4c4" stroke-width="0.84"/><line x1="223.7" y1="372.7" x2="229.3" y2="357.3" stroke="#9c9c9c" stroke-width="2.4"/><line x1="223.7" y1="372.7" x2="229.3" y2="357.3" stroke="#c4c4c4" stroke-width="0.84"/><line x1="243.4" y1="382.6" x2="229.3" y2="357.3" stroke="#9c9c9c" stroke-width="2.4"/><line x1="243.4" y1="382.6" x2="229.3" y2="357.3" stroke="#c4c4c4" stroke-width="0.84"/><line x1="306.6" y1="389.6" x2="320.7" y2="359.5" stroke="#9c9c9c" stroke-width="2.4"/><line x1="306.6" y1="389.6" x2="320.7" y2="359.5" stroke="#c4c4c4" stroke-width="0.84"/><line x1="378.3" y1="384.0" x2="360.0" y2="356.4" stroke="#9c9c9c" stroke-width="2.4"/><line x1="378.3" y1="384.0" x2="360.0" y2="356.4" stroke="#c4c4c4" stroke-width="0.84"/><line x1="440.1" y1="345.4" x2="423.3" y2="317.0" stroke="#9c9c9c" stroke-width="2.4"/><line x1="440.1" y1="345.4" x2="423.3" y2="317.0" stroke="#c4c4c4" stroke-width="0.84"/><line x1="146.0" y1="223.5" x2="151.5" y2="270.5" stroke="#3e3e3e" stroke-width="3.0"/><line x1="146.0" y1="223.5" x2="151.5" y2="270.5" stroke="#626262" stroke-width="1.0499999999999998"/><line x1="151.5" y1="270.5" x2="192.5" y2="290.0" stroke="#3e3e3e" stroke-width="3.0"/><line x1="151.5" y1="270.5" x2="192.5" y2="290.0" stroke="#626262" stroke-width="1.0499999999999998"/><line x1="192.5" y1="290.0" x2="228.7" y2="285.6" stroke="#3e3e3e" stroke-width="3.0"/><line x1="192.5" y1="290.0" x2="228.7" y2="285.6" stroke="#626262" stroke-width="1.0499999999999998"/><line x1="192.5" y1="290.0" x2="188.5" y2="339.0" stroke="#3e3e3e" stroke-width="3.0"/><line x1="192.5" y1="290.0" x2="188.5" y2="339.0" stroke="#626262" stroke-width="1.0499999999999998"/><line x1="228.7" y1="285.6" x2="212.4" y2="293.0" stroke="#3e3e3e" stroke-width="3.0"/><line x1="228.7" y1="285.6" x2="212.4" y2="293.0" stroke="#626262" stroke-width="1.0499999999999998"/><line x1="228.7" y1="285.6" x2="253.2" y2="245.7" stroke="#3e3e3e" stroke-width="3.0"/><line x1="228.7" y1="285.6" x2="253.2" y2="245.7" stroke="#626262" stroke-width="1.0499999999999998"/><line x1="228.7" y1="285.6" x2="257.4" y2="319.9" stroke="#3e3e3e" stroke-width="3.0"/><line x1="228.7" y1="285.6" x2="257.4" y2="319.9" stroke="#626262" stroke-width="1.0499999999999998"/><line x1="253.2" y1="245.7" x2="289.7" y2="249.0" stroke="#3e3e3e" stroke-width="3.0"/><line x1="253.2" y1="245.7" x2="289.7" y2="249.0" stroke="#626262" stroke-width="1.0499999999999998"/><line x1="289.7" y1="249.0" x2="317.0" y2="285.6" stroke="#3e3e3e" stroke-width="3.0"/><line x1="289.7" y1="249.0" x2="317.0" y2="285.6" stroke="#626262" stroke-width="1.0499999999999998"/><line x1="317.0" y1="285.6" x2="293.4" y2="324.9" stroke="#3e3e3e" stroke-width="3.0"/><line x1="317.0" y1="285.6" x2="293.4" y2="324.9" stroke="#626262" stroke-width="1.0499999999999998"/><line x1="317.0" y1="285.6" x2="354.4" y2="279.4" stroke="#3e3e3e" stroke-width="3.0"/><line x1="317.0" y1="285.6" x2="354.4" y2="279.4" stroke="#626262" stroke-width="1.0499999999999998"/><line x1="354.4" y1="279.4" x2="344.6" y2="268.7" stroke="#3e3e3e" stroke-width="3.0"/><line x1="354.4" y1="279.4" x2="344.6" y2="268.7" stroke="#626262" stroke-width="1.0499999999999998"/><line x1="354.4" y1="279.4" x2="379.7" y2="243.4" stroke="#3e3e3e" stroke-width="3.0"/><line x1="354.4" y1="279.4" x2="379.7" y2="243.4" stroke="#626262" stroke-width="1.0499999999999998"/><line x1="354.4" y1="279.4" x2="381.1" y2="317.9" stroke="#3e3e3e" stroke-width="3.0"/><line x1="354.4" y1="279.4" x2="381.1" y2="317.9" stroke="#626262" stroke-width="1.0499999999999998"/><line x1="379.7" y1="243.4" x2="423.3" y2="238.3" stroke="#3e3e3e" stroke-width="3.0"/><line x1="379.7" y1="243.4" x2="423.3" y2="238.3" stroke="#626262" stroke-width="1.0499999999999998"/><line x1="423.3" y1="238.3" x2="447.7" y2="278.5" stroke="#3e3e3e" stroke-width="3.0"/><line x1="423.3" y1="238.3" x2="447.7" y2="278.5" stroke="#626262" stroke-width="1.0499999999999998"/><line x1="447.7" y1="278.5" x2="423.3" y2="317.0" stroke="#3e3e3e" stroke-width="3.0"/><line x1="447.7" y1="278.5" x2="423.3" y2="317.0" stroke="#626262" stroke-width="1.0499999999999998"/><line x1="381.1" y1="317.9" x2="360.0" y2="356.4" stroke="#3e3e3e" stroke-width="3.0"/><line x1="381.1" y1="317.9" x2="360.0" y2="356.4" stroke="#626262" stroke-width="1.0499999999999998"/><line x1="360.0" y1="356.4" x2="320.7" y2="359.5" stroke="#3e3e3e" stroke-width="3.0"/><line x1="360.0" y1="356.4" x2="320.7" y2="359.5" stroke="#626262" stroke-width="1.0499999999999998"/><line x1="320.7" y1="359.5" x2="293.4" y2="324.9" stroke="#3e3e3e" stroke-width="3.0"/><line x1="320.7" y1="359.5" x2="293.4" y2="324.9" stroke="#626262" stroke-width="1.0499999999999998"/><line x1="293.4" y1="324.9" x2="257.4" y2="319.9" stroke="#3e3e3e" stroke-width="3.0"/><line x1="293.4" y1="324.9" x2="257.4" y2="319.9" stroke="#626262" stroke-width="1.0499999999999998"/><line x1="257.4" y1="319.9" x2="229.3" y2="357.3" stroke="#3e3e3e" stroke-width="3.0"/><line x1="257.4" y1="319.9" x2="229.3" y2="357.3" stroke="#626262" stroke-width="1.0499999999999998"/><line x1="229.3" y1="357.3" x2="188.5" y2="339.0" stroke="#3e3e3e" stroke-width="3.0"/><line x1="229.3" y1="357.3" x2="188.5" y2="339.0" stroke="#626262" stroke-width="1.0499999999999998"/><line x1="423.3" y1="314.9" x2="381.1" y2="315.8" stroke="#474747" stroke-width="2.0"/><line x1="423.3" y1="314.9" x2="381.1" y2="315.8" stroke="#747474" stroke-width="0.7"/><line x1="423.3" y1="319.1" x2="381.1" y2="320.0" stroke="#474747" stroke-width="2.0"/><line x1="423.3" y1="319.1" x2="381.1" y2="320.0" stroke="#747474" stroke-width="0.7"/><line x1="359.8" y1="354.3" x2="320.5" y2="357.4" stroke="#474747" stroke-width="2.0"/><line x1="359.8" y1="354.3" x2="320.5" y2="357.4" stroke="#747474" stroke-width="0.7"/><line x1="360.2" y1="358.5" x2="320.9" y2="361.6" stroke="#474747" stroke-width="2.0"/><line x1="360.2" y1="358.5" x2="320.9" y2="361.6" stroke="#747474" stroke-width="0.7"/><line x1="150.3" y1="268.9" x2="124.2" y2="288.4" stroke="#5a0808" stroke-width="2.4"/><line x1="150.3" y1="268.9" x2="124.2" y2="288.4" stroke="#b81414" stroke-width="0.84"/><line x1="152.7" y1="272.1" x2="126.6" y2="291.6" stroke="#5a0808" stroke-width="2.4"/><line x1="152.7" y1="272.1" x2="126.6" y2="291.6" stroke="#b81414" stroke-width="0.84"/><line x1="447.7" y1="280.5" x2="485.1" y2="280.5" stroke="#5a0808" stroke-width="2.4"/><line x1="447.7" y1="280.5" x2="485.1" y2="280.5" stroke="#b81414" stroke-width="0.84"/><line x1="447.7" y1="276.5" x2="485.1" y2="276.5" stroke="#5a0808" stroke-width="2.4"/><line x1="447.7" y1="276.5" x2="485.1" y2="276.5" stroke="#b81414" stroke-width="0.84"/><circle cx="116.9" cy="213.0" r="4.4" fill="url(#gH)"/><circle cx="171.7" cy="207.4" r="4.4" fill="url(#gH)"/><circle cx="195.6" cy="318.7" r="4.4" fill="url(#gH)"/><circle cx="234.9" cy="220.9" r="4.4" fill="url(#gH)"/><circle cx="306.6" cy="222.3" r="4.4" fill="url(#gH)"/><circle cx="324.9" cy="240.0" r="4.4" fill="url(#gH)"/><circle cx="363.7" cy="215.9" r="4.4" fill="url(#gH)"/><circle cx="440.1" cy="215.9" r="4.4" fill="url(#gH)"/><circle cx="279.9" cy="332.0" r="4.4" fill="url(#gH)"/><circle cx="161.3" cy="350.2" r="4.4" fill="url(#gH)"/><circle cx="223.7" cy="372.7" r="4.4" fill="url(#gH)"/><circle cx="243.4" cy="382.6" r="4.4" fill="url(#gH)"/><circle cx="306.6" cy="389.6" r="4.4" fill="url(#gH)"/><circle cx="378.3" cy="384.0" r="4.4" fill="url(#gH)"/><circle cx="440.1" cy="345.4" r="4.4" fill="url(#gH)"/><circle cx="212.4" cy="293.0" r="12.3" fill="url(#gC)"/><circle cx="354.4" cy="279.4" r="12.3" fill="url(#gC)"/><circle cx="146.0" cy="223.5" r="12.3" fill="url(#gC)"/><circle cx="151.5" cy="270.5" r="12.3" fill="url(#gC)"/><circle cx="192.5" cy="290.0" r="12.3" fill="url(#gC)"/><circle cx="228.7" cy="285.6" r="12.3" fill="url(#gC)"/><circle cx="253.2" cy="245.7" r="12.3" fill="url(#gC)"/><circle cx="289.7" cy="249.0" r="12.3" fill="url(#gC)"/><circle cx="317.0" cy="285.6" r="12.3" fill="url(#gC)"/><circle cx="344.6" cy="268.7" r="12.3" fill="url(#gC)"/><circle cx="379.7" cy="243.4" r="12.3" fill="url(#gC)"/><circle cx="423.3" cy="238.3" r="12.3" fill="url(#gC)"/><circle cx="447.7" cy="278.5" r="12.3" fill="url(#gC)"/><circle cx="423.3" cy="317.0" r="12.3" fill="url(#gC)"/><circle cx="381.1" cy="317.9" r="12.3" fill="url(#gC)"/><circle cx="360.0" cy="356.4" r="12.3" fill="url(#gC)"/><circle cx="320.7" cy="359.5" r="12.3" fill="url(#gC)"/><circle cx="293.4" cy="324.9" r="12.3" fill="url(#gC)"/><circle cx="257.4" cy="319.9" r="12.3" fill="url(#gC)"/><circle cx="229.3" cy="357.3" r="12.3" fill="url(#gC)"/><circle cx="188.5" cy="339.0" r="12.3" fill="url(#gC)"/><circle cx="125.4" cy="290.0" r="10.3" fill="url(#gO)"/><circle cx="485.1" cy="278.5" r="10.3" fill="url(#gO)"/><line x1="146.1" y1="219.4" x2="146.4" y2="211.9" stroke="#151515" stroke-width="3.0"/><circle cx="146.4" cy="211.9" r="4.4" fill="url(#gH)"/><line x1="193.6" y1="282.1" x2="195.6" y2="267.5" stroke="#151515" stroke-width="3.0"/><line x1="194.2" y1="277.8" x2="195.6" y2="267.5" stroke="#9c9c9c" stroke-width="2.4"/><line x1="194.2" y1="277.8" x2="195.6" y2="267.5" stroke="#c4c4c4" stroke-width="0.84"/><circle cx="195.6" cy="267.5" r="4.4" fill="url(#gH)"/><line x1="195.7" y1="284.6" x2="201.5" y2="274.5" stroke="#151515" stroke-width="3.0"/><line x1="198.7" y1="279.4" x2="201.5" y2="274.5" stroke="#9c9c9c" stroke-width="2.4"/><line x1="198.7" y1="279.4" x2="201.5" y2="274.5" stroke="#c4c4c4" stroke-width="0.84"/><circle cx="201.5" cy="274.5" r="4.4" fill="url(#gH)"/><line x1="256.1" y1="242.4" x2="261.6" y2="236.4" stroke="#151515" stroke-width="3.0"/><line x1="261.4" y1="236.6" x2="261.6" y2="236.4" stroke="#9c9c9c" stroke-width="2.4"/><line x1="261.4" y1="236.6" x2="261.6" y2="236.4" stroke="#c4c4c4" stroke-width="0.84"/><circle cx="261.6" cy="236.4" r="4.4" fill="url(#gH)"/><line x1="355.4" y1="266.5" x2="375.5" y2="262.5" stroke="#303030" stroke-width="3.0"/><circle cx="375.5" cy="262.5" r="4.4" fill="url(#gH)"/><line x1="338.9" y1="278.0" x2="328.3" y2="295.4" stroke="#151515" stroke-width="3.0"/><line x1="338.2" y1="279.2" x2="328.3" y2="295.4" stroke="#9c9c9c" stroke-width="2.4"/><line x1="338.2" y1="279.2" x2="328.3" y2="295.4" stroke="#c4c4c4" stroke-width="0.84"/><circle cx="328.3" cy="295.4" r="4.4" fill="url(#gH)"/><line x1="423.3" y1="233.7" x2="423.3" y2="225.1" stroke="#151515" stroke-width="3.0"/><line x1="423.3" y1="226.0" x2="423.3" y2="225.1" stroke="#9c9c9c" stroke-width="2.4"/><line x1="423.3" y1="226.0" x2="423.3" y2="225.1" stroke="#c4c4c4" stroke-width="0.84"/><circle cx="423.3" cy="225.1" r="4.4" fill="url(#gH)"/><line x1="261.8" y1="316.9" x2="270.1" y2="311.4" stroke="#151515" stroke-width="3.0"/><line x1="267.6" y1="313.1" x2="270.1" y2="311.4" stroke="#9c9c9c" stroke-width="2.4"/><line x1="267.6" y1="313.1" x2="270.1" y2="311.4" stroke="#c4c4c4" stroke-width="0.84"/><circle cx="270.1" cy="311.4" r="4.4" fill="url(#gH)"/><line x1="186.3" y1="341.9" x2="182.1" y2="347.4" stroke="#151515" stroke-width="3.0"/><circle cx="182.1" cy="347.4" r="4.4" fill="url(#gH)"/></g></svg></body></html>
